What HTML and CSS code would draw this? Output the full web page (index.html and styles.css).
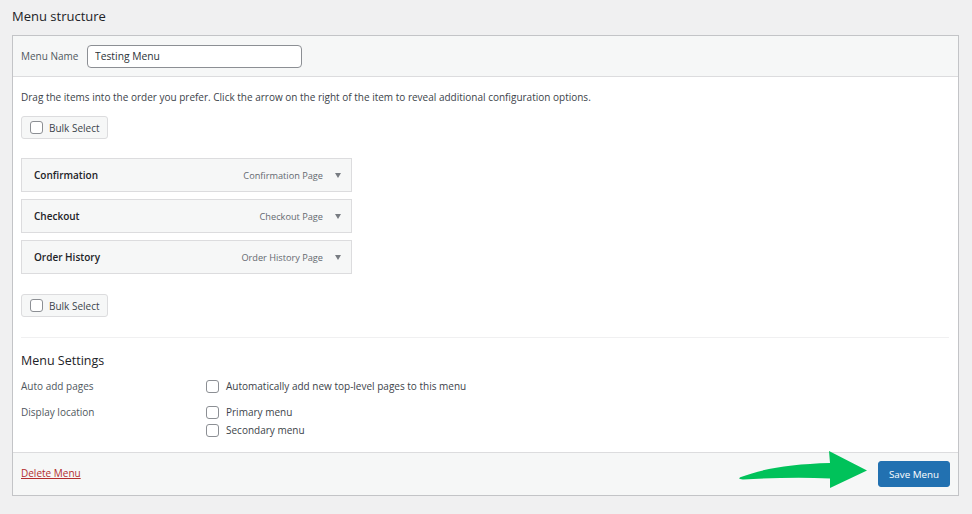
FILE: index.html
```html
<!DOCTYPE html>
<html lang="en">
<head>
<meta charset="utf-8">
<title>Menu structure</title>
<link rel="stylesheet" href="styles.css">
</head>
<body>
<div class="page">
  <h2 class="title">Menu structure</h2>
  <div class="panel">
    <div class="panel-header">
      <label class="name-label" for="menu-name">Menu Name</label>
      <input id="menu-name" class="name-input" type="text" value="Testing Menu">
    </div>
    <div class="panel-body">
      <p class="drag-text">Drag the items into the order you prefer. Click the arrow on the right of the item to reveal additional configuration options.</p>
      <div class="bulk"><span class="check"></span><span>Bulk Select</span></div>
      <ul class="items">
        <li class="item"><span class="item-title">Confirmation</span><span class="item-type">Confirmation Page</span><span class="caret"></span></li>
        <li class="item"><span class="item-title">Checkout</span><span class="item-type">Checkout Page</span><span class="caret"></span></li>
        <li class="item"><span class="item-title">Order History</span><span class="item-type">Order History Page</span><span class="caret"></span></li>
      </ul>
      <div class="bulk bulk-bottom"><span class="check"></span><span>Bulk Select</span></div>
      <div class="divider"></div>
      <h3 class="settings-title">Menu Settings</h3>
      <div class="settings">
        <div class="set-label">Auto add pages</div>
        <div class="set-opts">
          <div class="opt"><span class="check"></span><span>Automatically add new top-level pages to this menu</span></div>
        </div>
        <div class="set-label">Display location</div>
        <div class="set-opts">
          <div class="opt"><span class="check"></span><span>Primary menu</span></div>
          <div class="opt"><span class="check"></span><span>Secondary menu</span></div>
        </div>
      </div>
    </div>
    <div class="panel-footer">
      <a class="delete" href="#">Delete Menu</a>
      <button class="save" type="button">Save Menu</button>
      <svg class="arrow" width="140" height="44" viewBox="735 448 140 44" aria-hidden="true">
        <path d="M741,477 C762,469 790,464 830,463 L829,451 L867,470.5 L830,488 L830,478.5 C800,477 770,478 743,479.5 C739,479.5 738,478 741,477 Z" fill="#00c25a"/>
      </svg>
    </div>
  </div>
</div>
</body>
</html>
```

FILE: styles.css
```css
* { box-sizing: border-box; }
html, body { margin: 0; padding: 0; }
body {
  background: #f0f0f1;
  font-family: "Open Sans", "Noto Sans", "Liberation Sans", sans-serif;
  font-size: 10px;
  color: #3c434a;
  width: 972px;
  height: 514px;
  overflow: hidden;
}
.page { padding: 0 13px 0 12px; }
.title {
  margin: 0;
  padding-top: 6px;
  font-size: 13px;
  font-weight: 400;
  line-height: 20px;
  color: #1d2327;
}
.panel {
  position: relative;
  margin-top: 9px;
  background: #fff;
  border: 1px solid #c3c4c7;
}
.panel-header {
  display: flex;
  align-items: center;
  height: 41px;
  padding: 0 8px;
  background: #f6f7f7;
  border-bottom: 1px solid #dcdcde;
}
.name-label { color: #50575e; width: 66px; }
.name-input {
  width: 215px;
  height: 23px;
  border: 1px solid #8c8f94;
  border-radius: 4px;
  padding: 0 7px;
  font-family: inherit;
  font-size: 10.3px;
  color: #2c3338;
  background: #fff;
}
.panel-body { padding: 12px 9px 13px 8px; }
.drag-text { margin: 0; line-height: 16px; }
.bulk {
  display: inline-flex;
  align-items: center;
  gap: 6px;
  height: 23px;
  margin-top: 11px;
  padding: 0 7px 0 8px;
  white-space: nowrap;
  background: #f6f7f7;
  border: 1px solid #dcdcde;
  border-radius: 3px;
  color: #3c434a;
}
.check {
  display: inline-block;
  width: 13px;
  height: 13px;
  border: 1px solid #8c8f94;
  border-radius: 3px;
  background: #fff;
  flex: none;
}
.items {
  list-style: none;
  margin: 19px 0 0;
  padding: 0;
  width: 331px;
  display: flex;
  flex-direction: column;
  gap: 7px;
}
.item {
  display: flex;
  align-items: center;
  height: 34px;
  padding: 0 10px 0 12px;
  background: #f6f7f7;
  border: 1px solid #dcdcde;
}
.item-title { font-weight: 600; color: #1d2327; flex: 1; }
.item-type { color: #646970; font-size: 9.2px; }
.caret {
  width: 0;
  height: 0;
  margin-left: 12px;
  border-left: 3.5px solid transparent;
  border-right: 3.5px solid transparent;
  border-top: 5px solid #787c82;
}
.bulk-bottom { margin-top: 20px; }
.divider {
  margin-top: 20px;
  height: 1px;
  background: #f0f0f1;
}
.settings-title {
  margin: 13px 0 0;
  font-size: 12.5px;
  font-weight: 400;
  line-height: 20px;
  color: #1d2327;
}
.settings {
  display: grid;
  grid-template-columns: 185px 1fr;
  row-gap: 8px;
  margin-top: 6px;
}
.set-label { color: #50575e; line-height: 18px; }
.set-opts { display: flex; flex-direction: column; }
.opt {
  display: flex;
  align-items: center;
  gap: 7px;
  height: 18px;
}
.panel-footer {
  position: relative;
  display: flex;
  justify-content: space-between;
  align-items: center;
  height: 43px;
  padding: 0 8px;
  background: #f6f7f7;
  border-top: 1px solid #dcdcde;
}
.delete { color: #b32d2e; text-decoration: underline; margin-top: -3px; }
.save {
  width: 72px;
  height: 26px;
  background: #2271b1;
  border: 1px solid #2271b1;
  border-radius: 3px;
  color: #fff;
  font-family: inherit;
  font-size: 9.8px;
  padding: 0;
}
.arrow {
  position: absolute;
  left: 722px;
  top: -5px;
}
```
